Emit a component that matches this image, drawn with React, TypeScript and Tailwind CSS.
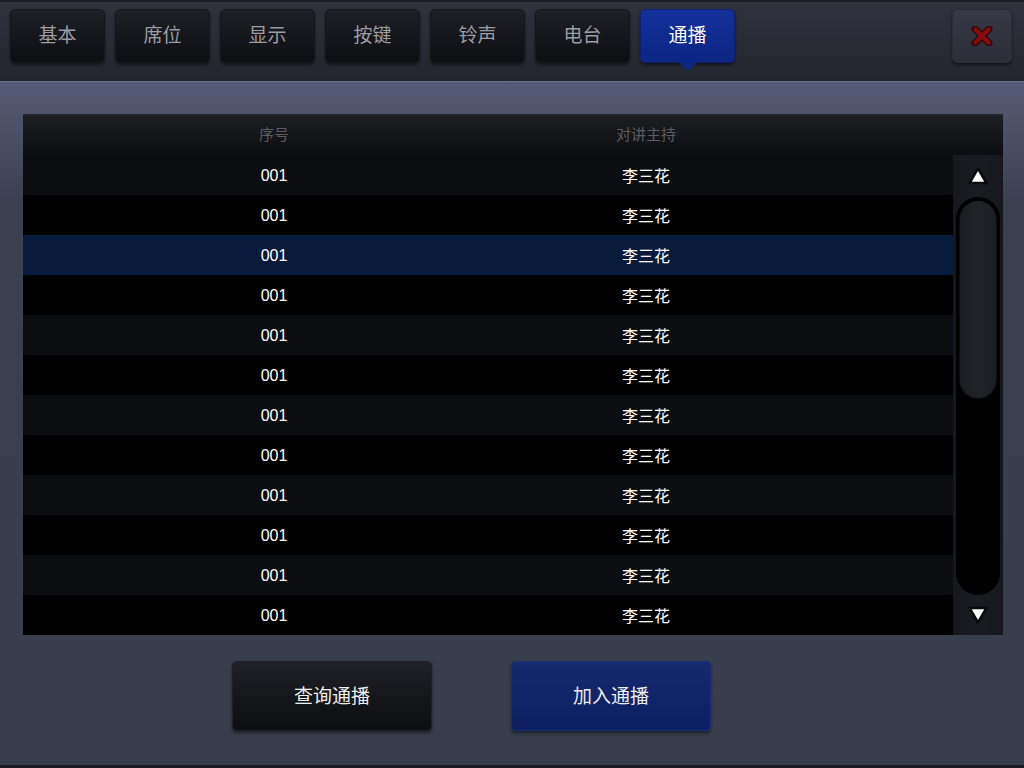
import React from 'react'

const tabs = ['基本', '席位', '显示', '按键', '铃声', '电台', '通播']
const rows = Array.from({ length: 12 }, () => ({ no: '001', name: '李三花' }))

const font = { fontFamily: '"Noto Sans CJK SC", "Liberation Sans", sans-serif' }

function Tab({ label, active }: { label: string; active: boolean }) {
  if (active) {
    return (
      <div className="relative flex h-[54px] w-[95px] items-center justify-center rounded-[5px] border border-[#0b2070] bg-gradient-to-b from-[#14309a] to-[#0c2684] pb-[3px] text-[19px] text-white shadow-[0_2px_3px_rgba(0,0,0,0.5)]">
        {label}
        {/* pointer under active tab */}
        <div className="absolute top-full left-1/2 -ml-[9px] h-0 w-0 border-x-[9px] border-t-[9px] border-x-transparent border-t-[#0c2684]" />
      </div>
    )
  }
  return (
    <div className="flex h-[54px] w-[95px] items-center justify-center rounded-[5px] border border-[#15161b] bg-gradient-to-b from-[#1f2026] to-[#0d0e12] pb-[3px] text-[19px] text-[#9c9da2] shadow-[0_2px_3px_rgba(0,0,0,0.5)]">
      {label}
    </div>
  )
}

export default function App() {
  return (
    <div className="flex h-[768px] w-[1024px] flex-col overflow-hidden bg-[#383d4b]" style={font}>
      {/* Top bar */}
      <div className="flex h-[82px] shrink-0 items-start border-t-2 border-b border-t-[#1b1d23] border-b-[#6a7088] bg-gradient-to-b from-[#30333e] to-[#22252d] px-[10px] pt-[7px]">
        <div className="flex gap-[10px]">
          {tabs.map((t, i) => (
            <Tab key={t} label={t} active={i === tabs.length - 1} />
          ))}
        </div>
        <div className="ml-auto mr-[2px] flex h-[54px] w-[60px] items-center justify-center rounded-[5px] border border-[#2a2c35] bg-gradient-to-b from-[#363945] to-[#2c2f39] shadow-[0_2px_3px_rgba(0,0,0,0.5)]">
          <svg width="22" height="20" viewBox="0 0 22 20">
            <path d="M4 3 L18 17 M18 3 L4 17" stroke="#2a0a0c" strokeWidth="7" strokeLinecap="round" />
            <path d="M4.5 3.5 L17.5 16.5 M17.5 3.5 L4.5 16.5" stroke="#8a0a0e" strokeWidth="4.5" strokeLinecap="round" />
          </svg>
        </div>
      </div>

      {/* Content */}
      <div className="flex flex-1 flex-col bg-gradient-to-b from-[#565c75] via-[#3b404f] via-[18%] to-[#383d4b] px-[23px] pt-[32px]">
        <div className="flex h-[521px] w-[980px] flex-col bg-black">
          {/* Header */}
          <div className="flex h-[41px] shrink-0 items-center border-t-2 border-[#26272d] bg-gradient-to-b from-[#1d1e23] to-[#0c0d10] pb-[2px] text-[15px] text-[#5b5c60]">
            <div className="w-[502px] text-center">序号</div>
            <div className="w-[242px] text-center">对讲主持</div>
          </div>
          <div className="flex flex-1">
            <div className="flex w-[930px] flex-col">
              {rows.map((r, i) => (
                <div
                  key={i}
                  className={`flex h-[40px] items-center text-white ${
                    i === 2 ? 'bg-[#081b3b]' : i % 2 === 0 ? 'bg-[#0c0d10]' : 'bg-black'
                  }`}
                >
                  <div className="w-[502px] pt-[2px] text-center text-[16px]" style={{ fontFamily: '"Liberation Sans", sans-serif' }}>
                    {r.no}
                  </div>
                  <div className="w-[242px] pb-[1px] text-center text-[16px]">{r.name}</div>
                </div>
              ))}
            </div>
            {/* Scrollbar */}
            <div className="flex w-[50px] flex-col items-center bg-gradient-to-r from-[#17181d] via-[#1b1c22] to-[#16171c]">
              <div className="flex h-[42px] items-center justify-center">
                <svg width="22" height="20" viewBox="0 0 22 20">
                  <path d="M11 2.5 L19.5 17 L2.5 17 Z" fill="#fff" stroke="#0a0a0c" strokeWidth="2.5" strokeLinejoin="round" />
                </svg>
              </div>
              <div className="flex h-[398px] w-[44px] flex-col rounded-[22px] bg-black p-[4px]">
                <div className="h-[196px] rounded-[18px] bg-gradient-to-r from-[#1c1d22] via-[#222328] to-[#1c1d22] shadow-[0_1px_2px_rgba(80,82,95,0.6)]" />
              </div>
              <div className="flex h-[40px] items-center justify-center">
                <svg width="22" height="20" viewBox="0 0 22 20">
                  <path d="M11 17.5 L19.5 3 L2.5 3 Z" fill="#fff" stroke="#0a0a0c" strokeWidth="2.5" strokeLinejoin="round" />
                </svg>
              </div>
            </div>
          </div>
        </div>

        {/* Buttons */}
        <div className="mt-[26px] flex gap-[79px] pl-[209px]">
          <div className="flex h-[70px] w-[200px] items-center justify-center rounded-[4px] border border-[#202127] bg-gradient-to-b from-[#202126] to-[#0c0d11] pb-[2px] text-[19px] text-[#eeeeee] shadow-[0_2px_3px_rgba(0,0,0,0.5)]">
            查询通播
          </div>
          <div className="flex h-[70px] w-[200px] items-center justify-center rounded-[4px] border border-[#1b2e78] bg-gradient-to-b from-[#162a70] to-[#0d1e62] pb-[2px] text-[19px] text-[#eeeeee] shadow-[0_2px_3px_rgba(0,0,0,0.5)]">
            加入通播
          </div>
        </div>
      </div>
      <div className="h-[3px] shrink-0 bg-[#1a1c22]" />
    </div>
  )
}
